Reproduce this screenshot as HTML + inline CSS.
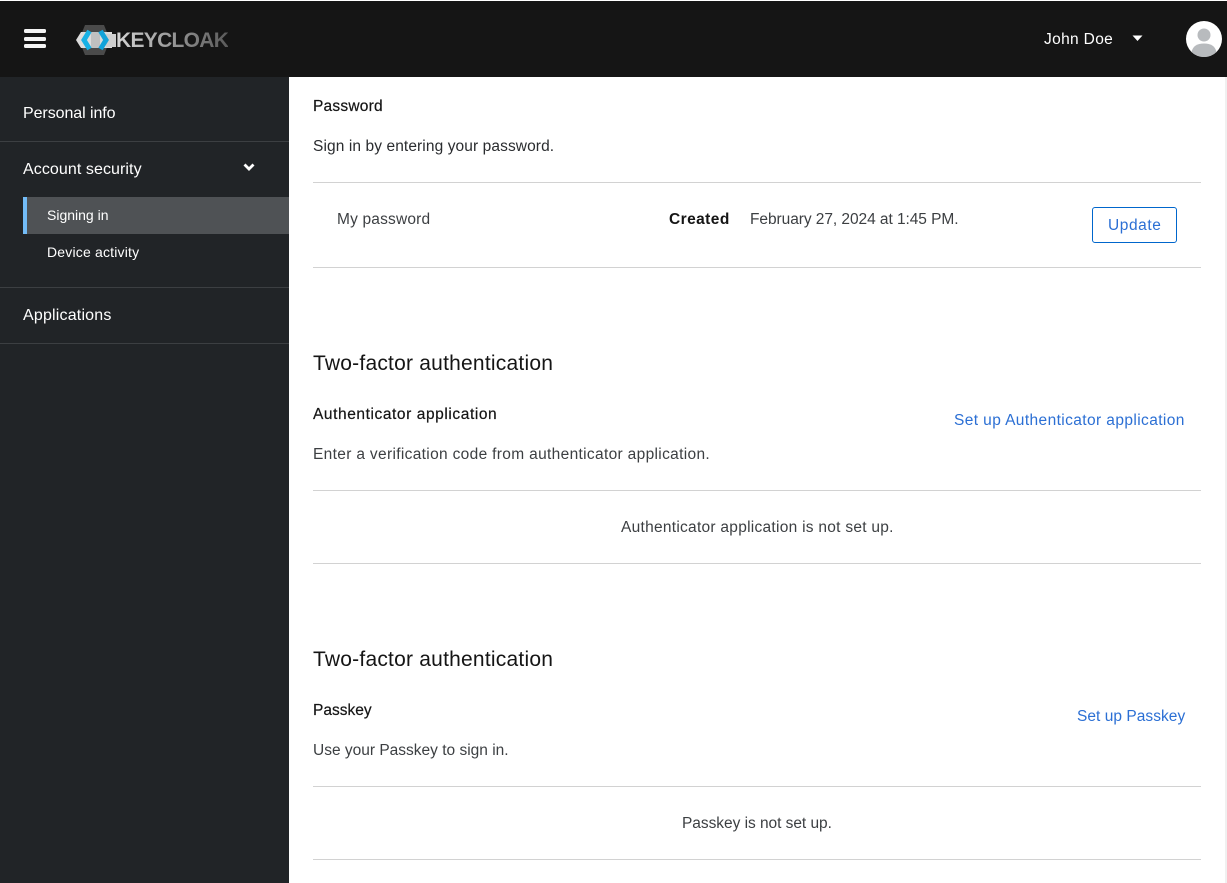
<!DOCTYPE html>
<html><head><meta charset="utf-8"><style>
html,body{margin:0;padding:0;width:1227px;height:883px;overflow:hidden;background:#fff;font-family:"Liberation Sans",sans-serif;color:#151515}
.a{position:absolute;white-space:nowrap;line-height:20px;font-size:15.5px}
.r{position:absolute;height:1px;background:#d2d2d2;left:313px;width:888px}
.s{position:absolute;left:0;width:289px;height:1px;background:#3c3f42}
.n{color:#fff;font-size:16px}
.h{font-size:21px;line-height:26px}
.b{color:#2b6fd4}
</style></head><body>
<div style="position:absolute;left:0;top:1px;width:1227px;height:76px;background:#151515"></div>
<div style="position:absolute;left:0;top:77px;width:289px;height:806px;background:#212427"></div>
<div style="position:absolute;left:1225px;top:77px;width:2px;height:806px;background:#f0f0f0"></div>
<svg style="position:absolute;left:24px;top:29px" width="22" height="20"><rect y="0" width="22" height="4" rx="1.500" fill="#f4f4f4"/><rect y="8" width="22" height="4" rx="1.500" fill="#f4f4f4"/><rect y="15" width="22" height="4" rx="1.500" fill="#f4f4f4"/></svg>
<svg style="position:absolute;left:76px;top:25px" width="44" height="32" viewBox="0 0 44 32">
<polygon points="9,0 28,0 34,15 28,30 9,30 3,15" fill="#4a4a4a"/>
<polygon points="0,15 5,7 36,7 36,23 5,23" fill="#dcdcdc"/>
<polygon points="15,7 24,7 24,23 15,23" fill="#c0c0c0"/>
<polygon points="30,9 40,9 40,22 30,22" fill="#cfcfcf"/>
<path d="M13.500,6 L8,15 L13.500,24" fill="none" stroke="#16b1e6" stroke-width="5"/>
<path d="M24.500,6 L30,15 L24.500,24" fill="none" stroke="#12a3da" stroke-width="5"/>
</svg>
<div class="a" style="left:116px;top:29px;font-size:21px;line-height:24px;font-weight:700;letter-spacing:-.7px;background:linear-gradient(90deg,#d6d6d6,#5a5a5a);-webkit-background-clip:text;background-clip:text;color:transparent">KEYCLOAK</div>
<div class="a" style="left:1044px;top:30px;color:#fff;letter-spacing:.35px">John Doe</div>
<svg style="position:absolute;left:1132px;top:35px" width="11" height="7"><path d="M0.500,0.500H10.500L5.500,6Z" fill="#fff"/></svg>
<svg style="position:absolute;left:1186px;top:21px" width="36" height="36" viewBox="0 0 36 36"><circle cx="18" cy="18" r="18" fill="#fff"/><circle cx="18" cy="14" r="6.500" fill="#b8bbbe"/><path d="M5.500 31C7 25 11 22.500 18 22.500S29 25 30.500 31A18 18 0 0 1 5.500 31Z" fill="#b8bbbe"/></svg>

<div class="a n" style="left:23px;top:104px;letter-spacing:-.07px">Personal info</div>
<div class="s" style="top:141px"></div>
<div class="a n" style="left:23px;top:160px;letter-spacing:.08px">Account security</div>
<svg style="position:absolute;left:243px;top:163px" width="12" height="9"><path d="M1.500 1.500L6 6L10.500 1.500" fill="none" stroke="#fff" stroke-width="2.800"/></svg>
<div style="position:absolute;left:23px;top:197px;width:266px;height:37px;background:#4f5255"></div>
<div style="position:absolute;left:23px;top:197px;width:4px;height:37px;background:#73bcf7"></div>
<div class="a" style="left:47px;top:205px;color:#fff;font-size:14px">Signing in</div>
<div class="a" style="left:47px;top:242px;color:#fff;font-size:14px;letter-spacing:.19px">Device activity</div>
<div class="s" style="top:287px"></div>
<div class="a n" style="left:23px;top:306px;letter-spacing:.19px">Applications</div>
<div class="s" style="top:343px"></div>

<div class="a" style="left:313px;top:97px;letter-spacing:.22px;-webkit-text-stroke:.2px #151515">Password</div>
<div class="a" style="left:313px;top:137px;letter-spacing:.1px;color:#2a2c2f">Sign in by entering your password.</div>
<div class="r" style="top:182px"></div>
<div class="a" style="left:337px;top:210px;color:#3c3f42;letter-spacing:.18px">My password</div>
<div class="a" style="left:669px;top:210px;font-weight:700;letter-spacing:.43px">Created</div>
<div class="a" style="left:750px;top:210px;color:#3c3f42;letter-spacing:-.06px">February 27, 2024 at 1:45 PM.</div>
<div style="position:absolute;left:1092px;top:207px;width:83px;height:34px;border:1px solid #06c;border-radius:3px"></div>
<div class="a b" style="left:1108px;top:216px;letter-spacing:.57px">Update</div>
<div class="r" style="top:267px"></div>

<div class="a h" style="left:313px;top:351px;letter-spacing:.22px">Two-factor authentication</div>
<div class="a" style="left:313px;top:405px;letter-spacing:.58px;-webkit-text-stroke:.2px #151515">Authenticator application</div>
<div class="a b" style="left:954px;top:411px;letter-spacing:.4px">Set up Authenticator application</div>
<div class="a" style="left:313px;top:445px;color:#3c3f42;letter-spacing:.33px">Enter a verification code from authenticator application.</div>
<div class="r" style="top:490px"></div>
<div class="a" style="left:621px;top:518px;color:#3c3f42;letter-spacing:.27px">Authenticator application is not set up.</div>
<div class="r" style="top:563px"></div>

<div class="a h" style="left:313px;top:647px;letter-spacing:.22px">Two-factor authentication</div>
<div class="a" style="left:313px;top:701px;-webkit-text-stroke:.2px #151515">Passkey</div>
<div class="a b" style="left:1077px;top:707px;letter-spacing:.04px">Set up Passkey</div>
<div class="a" style="left:313px;top:741px;color:#3c3f42">Use your Passkey to sign in.</div>
<div class="r" style="top:786px"></div>
<div class="a" style="left:682px;top:814px;color:#3c3f42;letter-spacing:-.04px">Passkey is not set up.</div>
<div class="r" style="top:859px"></div>
</body></html>
